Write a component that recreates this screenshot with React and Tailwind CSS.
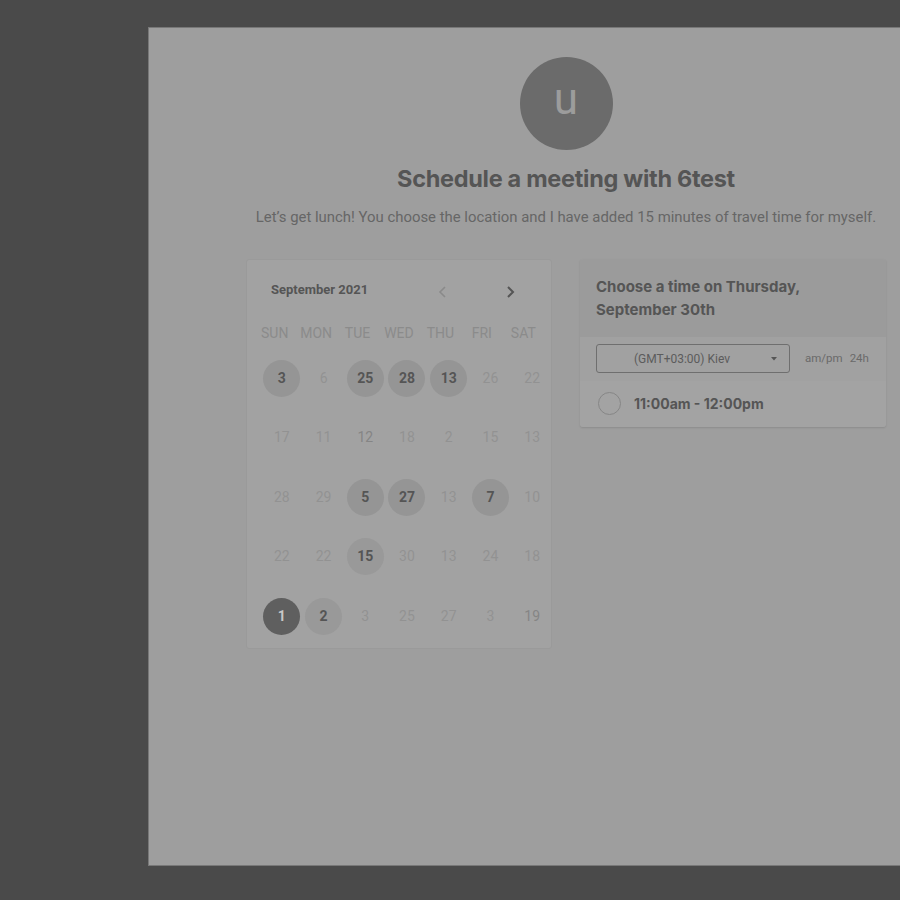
import React from "react";

const rows = [
  [
    { n: 3, s: "sel" },
    { n: 6 },
    { n: 25, s: "sel" },
    { n: 28, s: "sel" },
    { n: 13, s: "sel" },
    { n: 26 },
    { n: 22 },
  ],
  [
    { n: 17 },
    { n: 11 },
    { n: 12, s: "mid" },
    { n: 18 },
    { n: 2 },
    { n: 15 },
    { n: 13 },
  ],
  [
    { n: 28 },
    { n: 29 },
    { n: 5, s: "sel" },
    { n: 27, s: "sel" },
    { n: 13 },
    { n: 7, s: "sel" },
    { n: 10 },
  ],
  [
    { n: 22 },
    { n: 22 },
    { n: 15, s: "soft" },
    { n: 30 },
    { n: 13 },
    { n: 24 },
    { n: 18 },
  ],
  [
    { n: 1, s: "today" },
    { n: 2, s: "soft" },
    { n: 3 },
    { n: 25 },
    { n: 27 },
    { n: 3 },
    { n: 19, s: "mid" },
  ],
];

const days = ["SUN", "MON", "TUE", "WED", "THU", "FRI", "SAT"];

function Day({ n, s }) {
  if (s === "sel" || s === "soft" || s === "today") {
    const bg =
      s === "today"
        ? "bg-[#5f5f5f] text-[#c8c8c8]"
        : s === "soft"
        ? "bg-[#999] text-[#555]"
        : "bg-[#959595] text-[#555]";
    return (
      <div className="flex justify-center">
        <div
          className={`w-[37px] h-[37px] rounded-full flex items-center justify-center text-[14px] font-bold ${bg}`}
        >
          {n}
        </div>
      </div>
    );
  }
  return (
    <div className="flex justify-center">
      <div
        className={`h-[37px] flex items-center text-[14px] ${
          s === "mid" ? "text-[#858585]" : "text-[#929292]"
        }`}
      >
        {n}
      </div>
    </div>
  );
}

function Calendar() {
  return (
    <div className="w-[306px] h-[390px] bg-[#a2a2a2] border border-[#9a9a9a] rounded-[3px] pt-[22px] font-['Roboto',sans-serif]">
      <div className="flex items-center pl-[24px] h-[16px]">
        <span className="text-[13px] font-bold text-[#555]">September 2021</span>
        <span className="ml-[70px] mt-[4px] text-[#8a8a8a]">
          <svg width="10" height="14" viewBox="0 0 10 14" fill="none">
            <path d="M7 2L2 7l5 5" stroke="currentColor" strokeWidth="1.6" />
          </svg>
        </span>
        <span className="ml-[57px] mt-[4px] text-[#555]">
          <svg width="10" height="14" viewBox="0 0 10 14" fill="none">
            <path d="M3 2l5 5-5 5" stroke="currentColor" strokeWidth="2" />
          </svg>
        </span>
      </div>
      <div className="grid grid-cols-7 w-[290px] ml-[7px] mt-[25px] text-[14px] text-[#8b8b8b]">
        {days.map((d) => (
          <div key={d} className="text-center">
            {d}
          </div>
        ))}
      </div>
      <div className="grid grid-cols-7 w-[292px] ml-[14px] mt-[16px] gap-y-[22.5px]">
        {rows.flat().map((c, i) => (
          <Day key={i} {...c} />
        ))}
      </div>
    </div>
  );
}

function TimePanel() {
  return (
    <div className="w-[306px] bg-[#a1a1a1] rounded-[3px] shadow-[0_1px_2px_rgba(0,0,0,0.12)] overflow-hidden">
      <div className="bg-[#9b9b9b] h-[78px] pl-[16px] pt-[16px] font-['Inter',sans-serif] text-[15px] font-bold leading-[23px] text-[#555]">
        Choose a time on Thursday,
        <br />
        September 30th
      </div>
      <div className="flex items-center h-[44px] pl-[16px] font-['Roboto',sans-serif]">
        <div className="w-[194px] h-[29px] border border-[#6f6f6f] rounded-[3px] flex items-center justify-center relative text-[12px] text-[#5c5c5c]">
          <span className="ml-[-22px]">(GMT+03:00) Kiev</span>
          <svg className="absolute right-[12px] top-[12px]" width="6" height="4" viewBox="0 0 6 4">
            <path d="M0 0h6L3 3.5z" fill="#555" />
          </svg>
        </div>
        <span className="ml-[15px] text-[11.5px] text-[#6a6a6a]">am/pm</span>
        <span className="ml-[7px] text-[11.5px] text-[#6a6a6a]">24h</span>
      </div>
      <div className="flex items-center h-[46px] bg-[#a3a3a3] pl-[18px]">
        <div className="w-[23px] h-[23px] rounded-full border-[1.5px] border-[#868686]" />
        <span className="ml-[13px] font-['Inter',sans-serif] text-[14px] font-bold text-[#555]">
          11:00am - 12:00pm
        </span>
      </div>
    </div>
  );
}

export default function App() {
  return (
    <div className="w-[900px] h-[900px] overflow-hidden bg-[#4a4a4a] pt-[27px] pl-[148px]">
      <div className="w-[835px] h-[839px] bg-[#9e9e9e] border-t border-l border-b border-[#787878] flex flex-col items-center pt-[29px]">
        <div className="w-[93px] h-[93px] rounded-full bg-[#6b6b6b] flex items-center justify-center font-['Roboto',sans-serif] text-[44px] text-[#9c9c9c] leading-none pb-[10px]">
          u
        </div>
        <h1 className="mt-[11px] font-['Inter',sans-serif] text-[23.5px] font-bold text-[#555] tracking-[-0.3px]">
          Schedule a meeting with 6test
        </h1>
        <p className="mt-[10px] font-['Roboto',sans-serif] text-[14.9px] text-[#666]">
          Let’s get lunch! You choose the location and I have added 15 minutes of travel time for myself.
        </p>
        <div className="flex items-start gap-[28px] mt-[30px]">
          <Calendar />
          <TimePanel />
        </div>
      </div>
    </div>
  );
}
